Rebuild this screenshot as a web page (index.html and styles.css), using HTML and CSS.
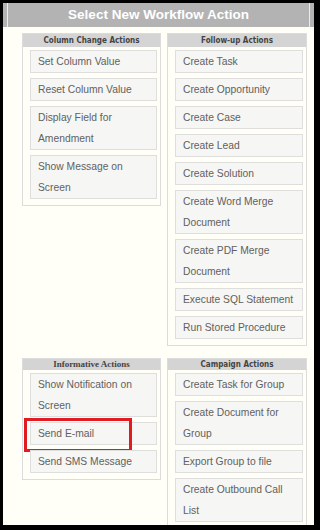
FILE: index.html
```html
<!DOCTYPE html>
<html lang="en">
<head>
    <meta charset="UTF-8">
    <title>Select New Workflow Action</title>
    <link rel="stylesheet" href="styles.css">
</head>
<body>
    <div class="frame">
        <div class="header">
            <div class="header-title">Select New Workflow Action</div>
        </div>
        <div class="groups">
            <div class="group">
                <div class="group-title">Column Change Actions</div>
                <div class="action">Set Column Value</div>
                <div class="action">Reset Column Value</div>
                <div class="action">Display Field for Amendment</div>
                <div class="action">Show Message on Screen</div>
            </div>
            <div class="group">
                <div class="group-title">Follow-up Actions</div>
                <div class="action">Create Task</div>
                <div class="action">Create Opportunity</div>
                <div class="action">Create Case</div>
                <div class="action">Create Lead</div>
                <div class="action">Create Solution</div>
                <div class="action">Create Word Merge Document</div>
                <div class="action">Create PDF Merge Document</div>
                <div class="action">Execute SQL Statement</div>
                <div class="action">Run Stored Procedure</div>
            </div>
            <div class="group">
                <div class="group-title small serif">Informative Actions</div>
                <div class="action">Show Notification on Screen</div>
                <div class="action marked">Send E-mail<span class="highlight"></span></div>
                <div class="action">Send SMS Message</div>
            </div>
            <div class="group">
                <div class="group-title small">Campaign Actions</div>
                <div class="action">Create Task for Group</div>
                <div class="action">Create Document for Group</div>
                <div class="action">Export Group to file</div>
                <div class="action">Create Outbound Call List</div>
            </div>
        </div>
    </div>
</body>
</html>
```

FILE: styles.css
```css
html, body {
    margin: 0;
    height: 100%;
}
body {
    font-family: "Liberation Sans", Arial, sans-serif;
}
.frame {
    box-sizing: border-box;
    height: 530px;
    border-style: solid;
    border-color: #000;
    border-width: 3px 6px 5px 3px;
    background-color: #fffff7;
    overflow: hidden;
}
.header {
    background-color: #b3b3b3;
    padding: 0 4px;
}
.header-title {
    height: 24px;
    line-height: 24px;
    border-left: 1px solid #ececec;
    border-right: 1px solid #ececec;
    color: #fff;
    font-weight: bold;
    font-size: 13.5px;
    text-align: center;
}
.groups {
    display: grid;
    grid-template-columns: 139px 140px;
    column-gap: 6px;
    row-gap: 12px;
    align-items: start;
    padding: 6px 0 0 19px;
}
.group {
    border: 1px solid #dcdcdc;
    padding: 0 3px 6px 7px;
    display: flex;
    flex-direction: column;
    gap: 5px;
}
.group-title {
    margin: 0 -3px -2px -7px;
    height: 13px;
    line-height: 13px;
    background-color: #d4d4d4;
    color: #444;
    font-family: "DejaVu Sans Condensed", "DejaVu Sans", sans-serif;
    font-weight: bold;
    font-size: 8px;
    text-align: center;
}
.group-title.small {
    height: 11px;
    line-height: 11px;
}
.group-title.serif {
    font-family: "Liberation Serif", serif;
    font-size: 9px;
}
.action {
    position: relative;
    border: 1px solid #dedede;
    background-color: #f6f6f4;
    padding: 0 4px 0 7px;
    line-height: 21px;
    color: #616161;
    font-size: 10.3px;
}
.highlight {
    position: absolute;
    left: -7px;
    top: -5px;
    width: 102px;
    height: 28px;
    border: 3px solid #e11b22;
}
```
